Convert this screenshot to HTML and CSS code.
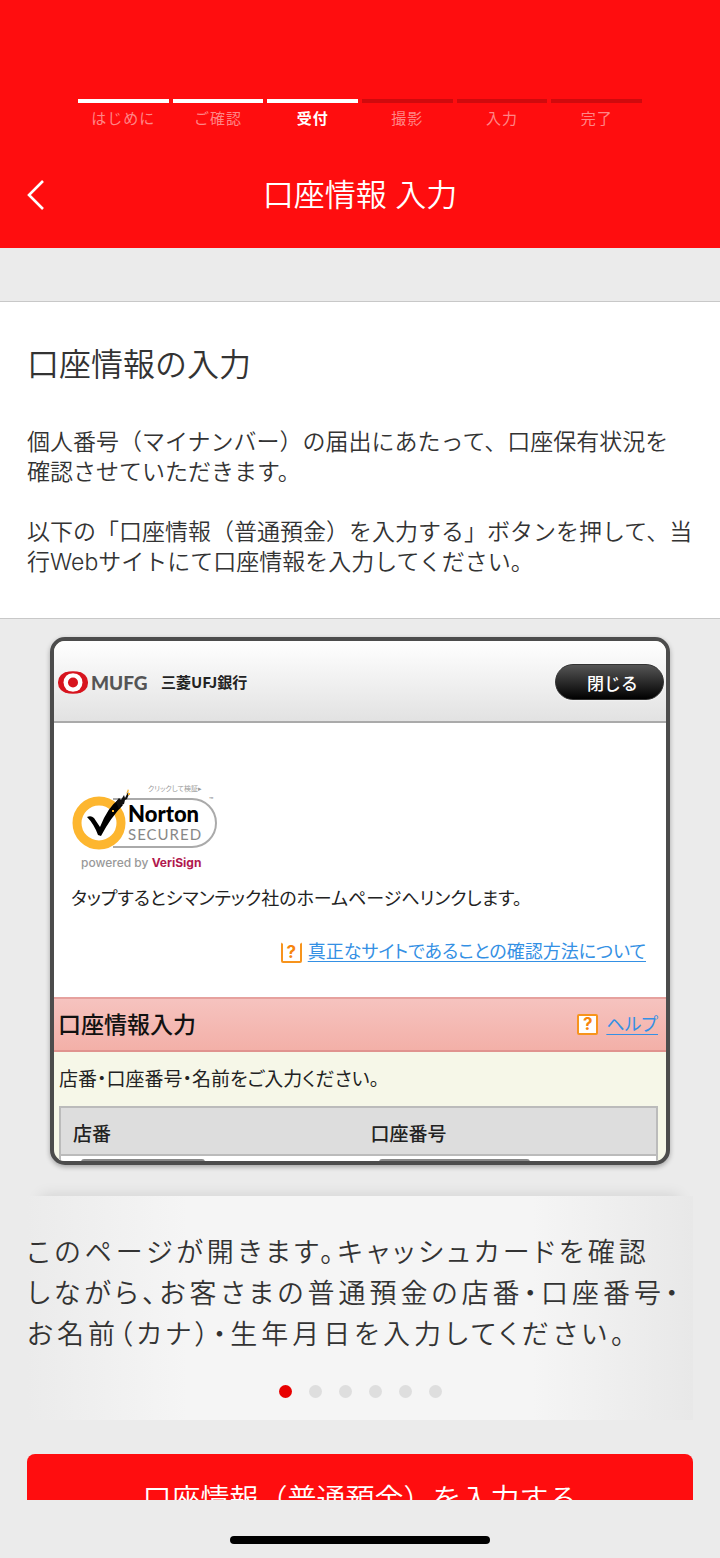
FILE: index.html
```html
<!DOCTYPE html>
<html lang="ja">
<head>
  <meta charset="UTF-8">
  <meta name="viewport" content="width=device-width, initial-scale=1.0">
  <title>口座情報 入力</title>
  <link rel="stylesheet" href="styles.css">
</head>
<body>
  <header class="header">
    <ol class="steps">
      <li class="done">はじめに</li>
      <li class="done">ご確認</li>
      <li class="done current">受付</li>
      <li>撮影</li>
      <li>入力</li>
      <li>完了</li>
    </ol>
    <div class="title-bar">
      <button class="back" aria-label="戻る">
        <svg width="18" height="30" viewBox="0 0 18 30"><path d="M16 1 2 15l14 14" fill="none" stroke="#fff" stroke-width="2.6"/></svg>
      </button>
      <h1>口座情報 入力</h1>
    </div>
  </header>

  <main>
    <section class="intro">
      <h2>口座情報の入力</h2>
      <p>個人番号（マイナンバー）の届出にあたって、口座保有状況を<br>確認させていただきます。</p>
      <p>以下の「口座情報（普通預金）を入力する」ボタンを押して、当<br>行Webサイトにて口座情報を入力してください。</p>
    </section>

    <!-- 銀行サイトのプレビュー -->
    <section class="preview">
      <div class="bank-header">
        <svg class="bank-logo" width="194" height="26" viewBox="0 0 194 26" role="img" aria-label="MUFG 三菱UFJ銀行">
          <rect x="0" y="3" width="30" height="21" rx="10" fill="#d7141e"/>
          <circle cx="15" cy="13.500" r="9.500" fill="#fff"/>
          <path d="M7 4.500q8-2.500 16 0M7 22.500q8 2.500 16 0" fill="none" stroke="#d7141e" stroke-width="2"/>
          <circle cx="15" cy="13.500" r="5" fill="#d7141e"/>
          <text class="logo-mufg" x="33" y="21">MUFG</text>
          <text class="logo-name" x="103" y="19">三菱UFJ銀行</text>
        </svg>
        <button class="close">閉じる</button>
      </div>

      <div class="bank-body">
        <svg class="norton" width="150" height="92" viewBox="0 0 150 92" role="img" aria-label="Norton SECURED">
          <text class="seal-note" x="77" y="11">クリックして検証▸</text>
          <path d="M42 19h79a24 24 0 0 1 0 48H42" fill="#fff" stroke="#aaa" stroke-width="2"/>
          <circle cx="28" cy="43" r="22" fill="#fff" stroke="#fdb62f" stroke-width="9"/>
          <path d="M16 37q4-2 7 1l6 9Q37 27 47 20l5 5Q40 37 30 56l-3-1Q23 44 16 37z" fill="#000"/>
          <path d="M45 22l3-4 2 2 3-5 1 3 3-6 1 2-2 5-2 1-1 4-3 1-2 4z" fill="#111"/>
          <path d="M55 14l2-5 1 2zM57 13h2v2h-2zM41 30h2v2h-2z" fill="#fdb62f"/>
          <text class="seal-norton" x="57" y="42">Norton</text>
          <text class="seal-secured" x="57" y="60">SECURED</text>
          <text class="seal-tm" x="138" y="23">™</text>
          <text class="seal-powered" x="10" y="87">powered by <tspan class="verisign">VeriSign</tspan></text>
        </svg>
        <p>タップするとシマンテック社のホームページへリンクします。</p>
        <div class="site-check">
          <span class="question open">?</span>
          <a href="#">真正なサイトであることの確認方法について</a>
        </div>
      </div>

      <div class="bank-heading">
        <h3>口座情報入力</h3>
        <span class="question">?</span>
        <a href="#">ヘルプ</a>
      </div>

      <div class="bank-form">
        <p>店番・口座番号・名前をご入力ください。</p>
        <table>
          <tr><th><label for="branch">店番</label></th><th><label for="account">口座番号</label></th></tr>
          <tr><td><input class="branch" id="branch" type="text"></td><td><input class="account" id="account" type="text"></td></tr>
        </table>
      </div>
    </section>

    <section class="guide">
      <p>このページが開きます。キャッシュカードを確認<br>しながら、お客さまの普通預金の店番・口座番号・<br>お名前（カナ）・生年月日を入力してください。</p>
      <div class="dots">
        <span class="active"></span><span></span><span></span><span></span><span></span><span></span>
      </div>
    </section>

    <div class="action">
      <button>口座情報（普通預金）を入力する</button>
    </div>
  </main>

  <footer class="home-area"><div class="home-bar"></div></footer>
</body>
</html>
```

FILE: styles.css
```css
* { box-sizing: border-box; }
body {
  margin: 0;
  background-color: #ebebeb;
  color: #333;
  font-family: Inter, "Noto Sans CJK JP", sans-serif;
  font-weight: 350;
}
h1, h2, h3, p { margin: 0; font-weight: inherit; }
button { border: none; padding: 0; font-family: inherit; font-weight: inherit; cursor: pointer; }
svg { display: block; }

/* header */
.header { background-color: #ff0d0f; color: white; padding-top: 99px; height: 248px; }
.steps {
  display: grid;
  grid-template-columns: repeat(6, 1fr);
  gap: 4px;
  list-style: none;
  margin: 0 78px;
  padding: 0;
  font-size: 15px;
  line-height: 20px;
  letter-spacing: 1px;
  text-align: center;
}
.steps li { border-top: 4px solid #d00a0d; padding-top: 6px; color: #ff8586; font-weight: 400; }
.steps .done { border-color: white; }
.steps .current { color: white; font-weight: bold; }
.title-bar {
  display: grid;
  grid-template-columns: 44px 1fr 44px;
  align-items: center;
  margin-top: 42px;
  padding: 0 27px;
  height: 48px;
}
.back { background: none; width: 44px; }
.title-bar h1 { font-size: 31px; line-height: 48px; text-align: center; }

/* intro */
.intro {
  margin-top: 53px;
  background-color: white;
  border-top: 1px solid #c8c8c8;
  border-bottom: 1px solid #c8c8c8;
  padding: 39px 20px 41px 27px;
  white-space: nowrap;
}
.intro h2 { font-size: 32px; line-height: 48px; margin-bottom: 38px; }
.intro p { font-size: 23px; line-height: 30px; }
.intro p + p { margin-top: 30px; }

/* bank page preview */
.preview {
  height: 528px;
  margin: 18px 50px 0;
  border: 4px solid #4c4c4c;
  border-radius: 15px;
  background-color: #f6f7e8;
  box-shadow: 0 2px 5px rgba(0, 0, 0, 0.3);
  overflow: hidden;
  color: #222;
  font-size: 19px;
  line-height: 28px;
  font-weight: 400;
  font-feature-settings: "palt";
  white-space: nowrap;
}
.preview a { color: #3490e4; font-size: 18px; text-underline-offset: 3px; }
.bank-header {
  display: flex;
  justify-content: space-between;
  align-items: center;
  height: 82px;
  padding: 2px 2px 0 4px;
  background: linear-gradient(#fff, #e2e2e2);
  border-bottom: 2px solid #aaa;
}
.close {
  width: 109px;
  height: 36px;
  padding-left: 6px;
  border: 1px solid #333;
  border-radius: 18px;
  background: linear-gradient(#555, #000);
  color: white;
  font-size: 17px;
  font-weight: 500;
  box-shadow: 0 0 2px white;
}
.logo-mufg { font: 900 19px Lato, sans-serif; fill: #555; }
.logo-name { font: bold 15px "Noto Sans CJK JP", sans-serif; fill: #222; }
.bank-body { height: 274px; padding: 57px 20px 0 17px; background-color: white; }
.bank-body p { font-size: 18px; }
.norton { margin-bottom: 13px; }
.seal-note { font-size: 7px; fill: #999; }
.seal-norton { font: 900 22px Lato, sans-serif; fill: #000; }
.seal-secured { font: 15px Lato, sans-serif; letter-spacing: 1px; fill: #888; }
.seal-tm { font-size: 7px; fill: #777; }
.seal-powered { font: 500 12px Inter, sans-serif; fill: #999; }
.verisign { font-weight: bold; fill: #b1184d; }
.site-check { display: flex; justify-content: flex-end; align-items: center; gap: 6px; margin-top: 25px; }
.question {
  width: 21px;
  height: 21px;
  border: 2px solid #f7941d;
  border-radius: 2px;
  background-color: white;
  color: #f7850d;
  font-size: 17px;
  font-weight: bold;
  line-height: 17px;
  text-align: center;
}
.question.open { border-top-color: transparent; }
.bank-heading {
  display: flex;
  align-items: center;
  gap: 8px;
  height: 55px;
  padding: 0 8px 0 4px;
  background: linear-gradient(#f6c3bf, #f3b0a8);
  border-top: 2px solid #e6a19e;
  border-bottom: 2px solid #e0938f;
}
.bank-heading h3 { flex: 1; font-size: 23px; font-weight: 500; color: #111; }
.bank-form { padding: 14px 8px 0 5px; }
.bank-form table { width: 100%; margin-top: 12px; border: 2px solid #bbb; border-collapse: collapse; table-layout: fixed; background-color: white; }
.bank-form th { height: 48px; padding: 7px 12px 0; background-color: #ddd; border-bottom: 2px solid #bbb; text-align: left; font-weight: 500; }
.bank-form td { padding: 3px 20px; }
.bank-form input { display: block; height: 30px; border: 2px solid #888; border-radius: 3px; }
.branch { width: 124px; }
.account { width: 151px; }

/* guide */
.guide {
  margin: 31px 27px 0;
  height: 224px;
  padding-top: 36px;
  background: linear-gradient(90deg, #ebebeb, #f5f5f5 24%, #f5f5f5 76%, #e8e8e8);
  box-shadow: 0 -14px 14px -14px rgba(0, 0, 0, 0.12);
  font-size: 27px;
  line-height: 41px;
  letter-spacing: 4px;
  font-feature-settings: "palt";
  white-space: nowrap;
}
.dots { display: flex; justify-content: center; gap: 17px; margin-top: 30px; }
.dots span { width: 13px; height: 13px; border-radius: 50%; background-color: #dedede; }
.dots .active { background-color: #e80000; }

/* bottom */
.action { margin: 34px 27px 0; height: 46px; overflow: hidden; }
.action button {
  width: 100%;
  height: 86px;
  border-radius: 8px;
  background-color: #ff0d0f;
  color: white;
  font-size: 29px;
}
.home-area { height: 58px; padding-top: 36px; }
.home-bar { width: 36%; height: 8px; margin: 0 auto; border-radius: 4px; background-color: #000; }
```
